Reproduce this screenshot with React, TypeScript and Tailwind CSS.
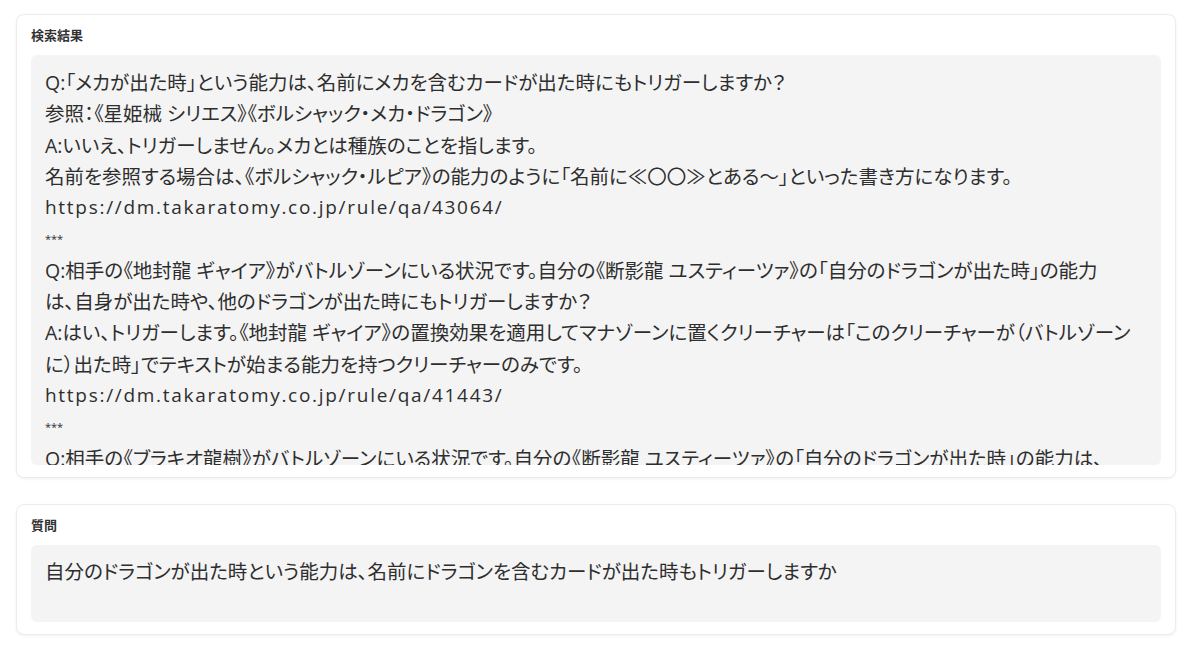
import React from 'react';

const resultLines = [
  'Q:「メカが出た時」という能力は、名前にメカを含むカードが出た時にもトリガーしますか？',
  '参照：《星姫械 シリエス》《ボルシャック・メカ・ドラゴン》',
  'A:いいえ、トリガーしません。メカとは種族のことを指します。',
  '名前を参照する場合は、《ボルシャック・ルピア》の能力のように「名前に≪〇〇≫とある〜」といった書き方になります。',
  'https://dm.takaratomy.co.jp/rule/qa/43064/',
  '***',
  'Q:相手の《地封龍 ギャイア》がバトルゾーンにいる状況です。自分の《断影龍 ユスティーツァ》の「自分のドラゴンが出た時」の能力',
  'は、自身が出た時や、他のドラゴンが出た時にもトリガーしますか？',
  'A:はい、トリガーします。《地封龍 ギャイア》の置換効果を適用してマナゾーンに置くクリーチャーは「このクリーチャーが（バトルゾーン',
  'に）出た時」でテキストが始まる能力を持つクリーチャーのみです。',
  'https://dm.takaratomy.co.jp/rule/qa/41443/',
  '***',
  'Q:相手の《ブラキオ龍樹》がバトルゾーンにいる状況です。自分の《断影龍 ユスティーツァ》の「自分のドラゴンが出た時」の能力は、',
  '自身が出た時や、他のドラゴンが出た時にもトリガーしますか？',
];

const font = { fontFamily: '"Open Sans", "Noto Sans CJK JP", sans-serif' };

function Card({ label, children }: { label: string; children: React.ReactNode }) {
  return (
    <div className="rounded-lg border border-[#ececec] bg-white px-[14px] pt-[12px] pb-[12px] shadow-[0_1px_3px_rgba(0,0,0,0.06)]">
      <div className="text-[13px] font-bold leading-[16px] text-[#333] mb-[12px]">{label}</div>
      {children}
    </div>
  );
}

export default function App() {
  return (
    <div
      className="min-h-screen bg-white pl-4 pr-6 pt-[14px] flex flex-col gap-[26px] text-[#2e2e2e] [font-feature-settings:'palt']"
      style={font}
    >
      <Card label="検索結果">
        <div className="h-[410px] overflow-hidden rounded-md bg-[#f4f4f4] px-[14px] pt-[12px]">
          {resultLines.map((line, i) => {
            if (line === '***') {
              return <div key={i} className="text-[11px] leading-[31.3px] whitespace-nowrap">***</div>;
            }
            if (line.startsWith('https://')) {
              return <div key={i} className="text-[19px] leading-[31.3px] whitespace-nowrap tracking-[0.09em]">{line}</div>;
            }
            return <div key={i} className="text-[19.5px] leading-[31.3px] whitespace-nowrap">{line}</div>;
          })}
        </div>
      </Card>
      <Card label="質問">
        <div className="h-[77px] rounded-md bg-[#f4f4f4] px-[14px] pt-[11px]">
          <div className="text-[19.5px] leading-[31.3px]">
            自分のドラゴンが出た時という能力は、名前にドラゴンを含むカードが出た時もトリガーしますか
          </div>
        </div>
      </Card>
    </div>
  );
}
